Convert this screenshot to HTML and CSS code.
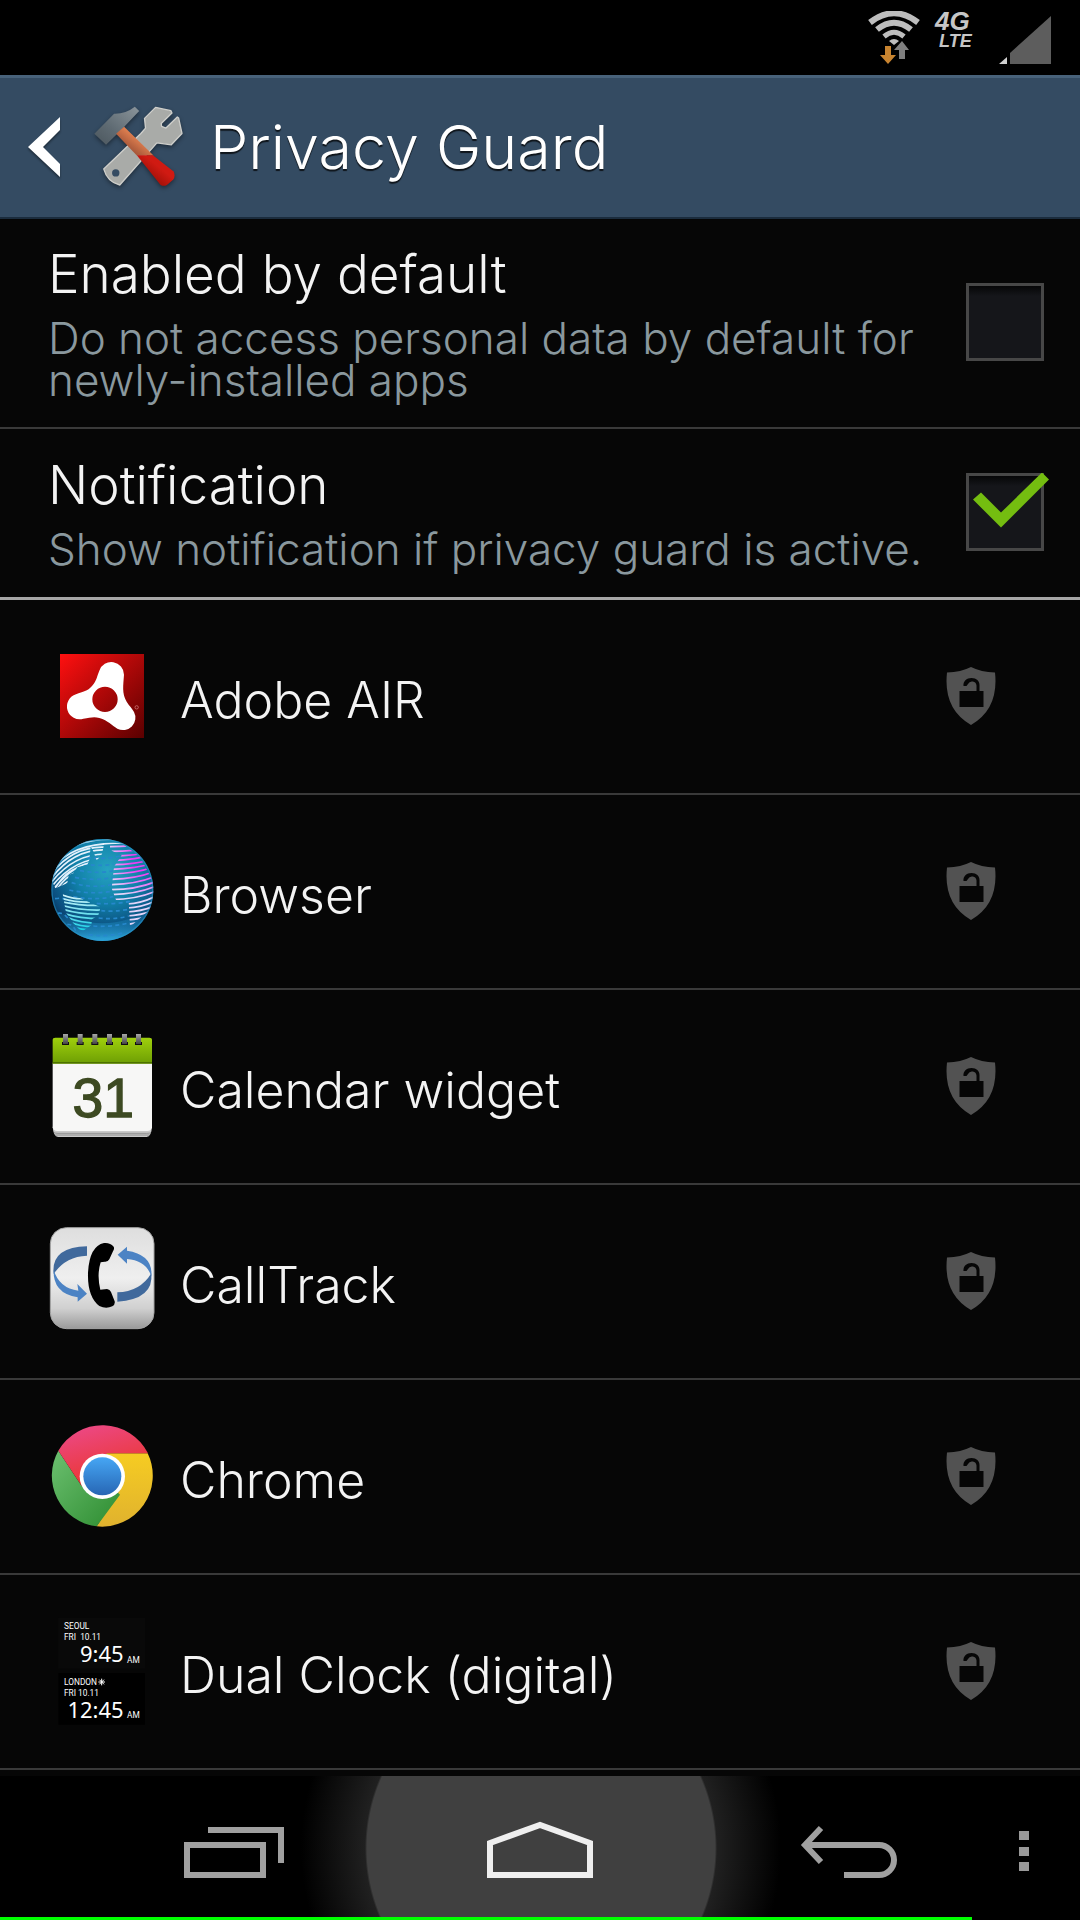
FILE: index.html
```
<!DOCTYPE html>
<html lang="en">
<head>
<meta charset="utf-8">
<meta name="viewport" content="width=device-width, initial-scale=1">
<title>Privacy Guard</title>
<link rel="stylesheet" href="styles.css">
</head>
<body>
<svg class="defs" aria-hidden="true">
  <symbol id="shield" viewBox="0 0 50 58">
    <path fill="#525252" d="M25 0Q35 5 49 5.500Q53 42 25 58Q-3 42 1 5.500Q15 5 25 0Z"/>
    <path fill="#060606" d="M13.500 24H30.500V18.500A4.500 4.500 0 0 0 22 17L20.500 19H17.500C17 14.500 20.500 11 25.500 11C30.500 11 33.500 14 33.500 18V24H37.500V40H13.500Z"/>
  </symbol>
</svg>

<div class="screen">
  <div class="status">
    <svg class="status-wifi" viewBox="0 0 52 53" role="img" aria-label="Wi-Fi">
      <g fill="none" stroke="#bdbdbd">
        <path stroke-width="6" d="M2 11.500Q26-7 50 11.500"/>
        <path stroke-width="6" d="M9 18.500Q26 5 43 18.500"/>
        <path stroke-width="5" d="M16 25.500Q26 17 36 25.500"/>
      </g>
      <path fill="#bdbdbd" d="M21 30Q26 26 31 30L26 34Z"/>
      <path fill="#7f7f7f" d="M34 30L41 39H37V48H31V39H26Z"/>
      <path fill="#c88430" d="M17 35H23V44H28L20 53L12 44H17Z"/>
    </svg>
    <div class="status-net"><span class="net-4g">4G</span><span class="net-lte">LTE</span></div>
    <svg class="status-signal" viewBox="0 0 52 48" role="img" aria-label="Signal">
      <path fill="#d0d0d0" d="M0 48L8 41V48Z"/>
      <path fill="#5d5d5d" d="M11 48V37L52 0V48Z"/>
    </svg>
  </div>

  <header class="bar">
    <button class="bar-back" type="button" aria-label="Back">
      <svg class="back-icon" viewBox="0 0 32 60"><path fill="#fff" d="M32 0V13L15 30L32 47V60L0 30Z"/></svg>
    </button>
    <svg class="bar-tools" viewBox="222 36 266 242" aria-hidden="true">
      <defs>
        <linearGradient id="head" x1="0" y1="1" x2="1" y2="0"><stop offset="0" stop-color="#4b565d"/><stop offset=".4" stop-color="#5e6a72"/><stop offset="1" stop-color="#8b959b"/></linearGradient>
        <linearGradient id="wood" x1="0" y1="1" x2="1" y2="0"><stop offset=".3" stop-color="#a8583a"/><stop offset=".6" stop-color="#e08050"/></linearGradient>
        <linearGradient id="grip" x1="0" y1="1" x2="1" y2="0"><stop offset=".3" stop-color="#a01008"/><stop offset=".6" stop-color="#d01a12"/></linearGradient>
      </defs>
      <path fill="#a9aba8" stroke="#cfcfcb" stroke-width="4" stroke-linejoin="round" d="M406 40L452 50L455 57L423 88L424 97L437 102L471 69L475 72L485 118L453 152L410 146L299 272Q262 264 251 224L362 118L376 102L373 73Z"/>
      <circle cx="287" cy="236" r="11" fill="#344b62"/>
      <path fill="url(#head)" d="M223 119L282 59Q316 60 344 38L357 51L304 107L258 152Z"/>
      <path fill="url(#wood)" d="M288 119L312 98L400 184L350 184Z"/>
      <path fill="url(#grip)" d="M350 183H398L460 232Q466 245 459 256L440 272Q430 277 421 272Z"/>
    </svg>
    <h1 class="bar-title">Privacy Guard</h1>
  </header>

  <main class="content">
    <section class="prefs">
      <label class="pref">
        <span class="pref-text"><span class="pref-title">Enabled by default</span><span class="pref-sub">Do not access personal data by default for newly-installed apps</span></span>
        <input class="check" type="checkbox">
      </label>
      <label class="pref">
        <span class="pref-text"><span class="pref-title">Notification</span><span class="pref-sub">Show notification if privacy guard is active.</span></span>
        <input class="check" type="checkbox" checked>
      </label>
    </section>

    <ul class="apps">
      <li class="app">
        <svg class="app-icon" viewBox="54 36 324 324" aria-hidden="true">
          <defs><linearGradient id="air" x1="0" y1="0" x2="1" y2="1"><stop offset="0" stop-color="#ff1010"/><stop offset="1" stop-color="#5a0000"/></linearGradient></defs>
          <rect x="90" y="72" width="252" height="252" fill="url(#air)"/>
          <path fill="#fff" fill-rule="evenodd" d="M208 122A38 38 0 0 1 282 134C280 165 275 190 290 215C298 228 306 234 312 246A37 37 0 0 1 262 296C245 286 235 272 208 264C190 259 180 264 160 266A37 37 0 0 1 138 193C160 184 172 184 186 168C201 150 201 138 208 122ZM225 170A38 38 0 1 0 225 246A38 38 0 1 0 225 170Z"/>
          <circle cx="320" cy="232" r="5" fill="none" stroke="#d88" stroke-width="2"/>
        </svg>
        <span class="app-name">Adobe AIR</span>
        <button class="app-guard" type="button" aria-label="Guard Adobe AIR"><svg class="shield"><use href="#shield"/></svg></button>
      </li>
      <li class="app">
        <svg class="app-icon" viewBox="54 621 324 324" aria-hidden="true">
          <defs>
            <radialGradient id="globe" cx=".55" cy=".3" r=".72"><stop offset="0" stop-color="#26a3c2"/><stop offset=".45" stop-color="#1180a8"/><stop offset=".8" stop-color="#0b4f80"/><stop offset="1" stop-color="#06294e"/></radialGradient>
            <linearGradient id="globe-base" x1="0" y1="0" x2="0" y2="1"><stop offset="0" stop-color="#0b6aa0" stop-opacity="0"/><stop offset="1" stop-color="#35b8ee"/></linearGradient>
            <radialGradient id="pink" gradientUnits="userSpaceOnUse" cx="345" cy="690" r="130"><stop offset=".3" stop-color="#f03cf4"/><stop offset=".9" stop-color="#e4d4fa"/></radialGradient>
            <linearGradient id="aqua" x1="0" y1="0" x2="0" y2="1"><stop offset="0" stop-color="#d5f4fa"/><stop offset="1" stop-color="#19d0e4"/></linearGradient>
            <clipPath id="disc"><circle cx="217" cy="780" r="153"/></clipPath>
            <clipPath id="land-east"><path d="M240 630L275 640L330 680L372 760L370 830L300 890L296 812L258 810L245 775L252 710L275 676L240 660Z"/></clipPath>
            <clipPath id="land-west"><path d="M150 635L290 624L290 640L222 644L216 672L200 692L190 664L182 650L178 690L172 705L142 712L130 730L116 735L112 760L76 775L60 740L90 670Z"/></clipPath>
            <clipPath id="land-south"><path d="M98 792L145 802L212 832L205 856L186 868L184 886L155 905L130 880L108 848Z"/></clipPath>
          </defs>
          <circle cx="217" cy="780" r="153" fill="url(#globe)"/>
          <g clip-path="url(#disc)">
            <path fill="url(#globe-base)" d="M60 830Q217 930 374 830V940H60Z"/>
            <g fill="none" stroke="#2688cc" stroke-width="5" stroke-dasharray="12 10">
              <path d="M170 682Q220 690 270 678M160 702Q220 710 250 702M150 722Q205 732 250 722M135 742Q195 754 250 742M125 758Q185 776 245 764M118 780Q180 794 245 784M130 800Q190 812 250 800M200 820Q250 824 300 814M214 842Q250 846 296 838M206 864Q250 870 296 858M190 888Q245 892 300 878M176 914Q230 922 280 908M75 806Q110 800 120 820M84 850Q100 846 118 870M112 884Q130 880 140 910"/>
            </g>
            <g fill="none" stroke="#e3f1fc" stroke-width="5" clip-path="url(#land-west)">
              <path d="M60 700Q140 610 300 632M60 720Q140 625 300 644M60 736Q130 645 230 652M60 750Q130 655 230 660M60 762Q130 670 230 672M60 776Q130 684 230 684M60 790Q130 700 190 698M60 802Q100 722 150 712M60 812Q95 744 140 726M70 814Q90 762 120 752M76 830Q95 782 120 766"/>
            </g>
            <g fill="none" stroke="url(#pink)" stroke-width="5" clip-path="url(#land-east)">
              <path d="M240 650Q300 650 372 640M245 664Q310 664 372 652M245 678Q320 678 374 662M245 692Q320 690 374 672M245 704Q320 704 374 686M245 718Q320 716 374 698M245 732Q320 730 374 710M245 748Q320 746 374 724M245 764Q320 762 374 740M245 779Q320 778 374 756M245 794Q320 792 374 770M245 809Q320 808 374 785M290 822Q335 820 374 800M290 834Q335 832 374 814M290 846Q335 844 374 828M290 858Q335 856 374 840M290 870Q335 868 374 852M290 884Q320 880 374 864"/>
            </g>
            <g fill="none" stroke="url(#aqua)" stroke-width="5" clip-path="url(#land-south)">
              <path d="M90 792Q130 808 160 806M90 804Q140 818 180 816M90 814Q150 828 215 826M95 826Q150 842 215 840M100 838Q150 854 215 852M100 850Q150 866 215 866M110 862Q150 880 215 880M120 876Q150 890 190 890M130 890Q155 900 180 900"/>
            </g>
          </g>
          <circle cx="217" cy="780" r="151" fill="none" stroke="#2a9cd0" stroke-opacity=".5" stroke-width="4"/>
        </svg>
        <span class="app-name">Browser</span>
        <button class="app-guard" type="button" aria-label="Guard Browser"><svg class="shield"><use href="#shield"/></svg></button>
      </li>
      <li class="app">
        <svg class="app-icon" viewBox="54 66 324 324" aria-hidden="true">
          <defs>
            <linearGradient id="cal" x1="0" y1="0" x2="0" y2="1"><stop offset="0" stop-color="#9fd00c"/><stop offset="1" stop-color="#6d9e04"/></linearGradient>
            <linearGradient id="ring" x1="0" y1="0" x2="0" y2="1"><stop offset="0" stop-color="#a8a8a8"/><stop offset="1" stop-color="#444"/></linearGradient>
          </defs>
          <path fill="#c9c9c9" d="M68 350H366Q364 380 350 381H84Q70 380 68 350Z"/>
          <path fill="none" stroke="#777" stroke-width="2" d="M72 368Q76 370 84 370H350Q360 370 362 368M76 375H358"/>
          <path fill="#f7f7f6" d="M68 160H366V352Q364 363 352 363H82Q70 363 68 352Z"/>
          <path fill="url(#cal)" d="M68 161V90Q68 83 76 83H358Q366 83 366 90V161Z"/>
          <path fill="#4d7200" d="M68 156H366V160H68Z"/>
          <path fill="#111" d="M96 96H117V105H96ZM140 96H161V105H140ZM184 96H205V105H184ZM228 96H249V105H228ZM273 96H294V105H273ZM315 96H336V105H315Z"/>
          <path fill="url(#ring)" d="M99 72H114V102H99ZM143 72H158V102H143ZM187 72H202V102H187ZM231 72H246V102H231ZM276 72H291V102H276ZM318 72H333V102H318Z"/>
          <text class="cal-day" x="220" y="320">31</text>
        </svg>
        <span class="app-name">Calendar widget</span>
        <button class="app-guard" type="button" aria-label="Guard Calendar widget"><svg class="shield"><use href="#shield"/></svg></button>
      </li>
      <li class="app">
        <svg class="app-icon" viewBox="54 651 324 324" aria-hidden="true">
          <defs><linearGradient id="tile" x1="0" y1="0" x2="0" y2="1"><stop offset="0" stop-color="#dedede"/><stop offset=".5" stop-color="#efefef"/><stop offset=".8" stop-color="#d0d0d0"/><stop offset="1" stop-color="#9a9a9a"/></linearGradient></defs>
          <rect x="61" y="653" width="311" height="303" rx="48" fill="url(#tile)" stroke="#a5a5a5" stroke-width="3"/>
          <path fill="#40699c" d="M171 709V737Q105 740 71 792Q62 712 171 709Z"/>
          <path fill="#4c83c4" d="M71 780Q88 835 145 842L142 822L171 851L143 875V862Q68 850 71 780Z"/>
          <path fill="#40699c" d="M262 875V847Q330 846 364 790Q372 868 262 875Z"/>
          <path fill="#4c83c4" d="M364 800Q350 752 291 747V761L263 734L291 710V722Q370 734 364 800Z"/>
          <path fill="#000" d="M222 699Q240 697 251 710Q254 716 249 724L238 748Q234 756 224 755L212 757Q200 795 211 839L231 837Q240 838 243 846L254 874Q256 884 247 889Q228 898 208 888Q172 860 174 789Q178 708 222 699Z"/>
        </svg>
        <span class="app-name">CallTrack</span>
        <button class="app-guard" type="button" aria-label="Guard CallTrack"><svg class="shield"><use href="#shield"/></svg></button>
      </li>
      <li class="app">
        <svg class="app-icon" viewBox="54 66 324 324" aria-hidden="true">
          <defs>
            <linearGradient id="red" x1=".3" y1="0" x2=".7" y2="1"><stop offset="0" stop-color="#ec4884"/><stop offset="1" stop-color="#ea3424"/></linearGradient>
            <linearGradient id="green" x1="0" y1="0" x2="1" y2="1"><stop offset="0" stop-color="#6cc070"/><stop offset="1" stop-color="#2d8c30"/></linearGradient>
            <linearGradient id="yellow" x1="0" y1="0" x2="0" y2="1"><stop offset="0" stop-color="#f6cc22"/><stop offset="1" stop-color="#e0b22e"/></linearGradient>
            <linearGradient id="blue" x1="0" y1="0" x2="0" y2="1"><stop offset="0" stop-color="#46a6f4"/><stop offset="1" stop-color="#2766b4"/></linearGradient>
          </defs>
          <path fill="url(#yellow)" d="M217 160H353A152 153 0 0 1 200 379L275 260Z"/>
          <path fill="url(#green)" d="M85 152A152 153 0 0 0 200 379L270 284L217 230L155 258Z"/>
          <path fill="url(#red)" d="M85 152A153 153 0 0 1 354 160H230L217 230L155 258Z"/>
          <circle cx="217" cy="229" r="68" fill="#fff"/>
          <circle cx="217" cy="229" r="57" fill="url(#blue)"/>
        </svg>
        <span class="app-name">Chrome</span>
        <button class="app-guard" type="button" aria-label="Guard Chrome"><svg class="shield"><use href="#shield"/></svg></button>
      </li>
      <li class="app">
        <svg class="app-icon" viewBox="54 651 324 324" aria-hidden="true">
          <path fill="#090909" d="M85 653H345V806H85Z"/>
          <path fill="#000" d="M85 819H345V974H85Z"/>
          <text class="clock-small" x="102" y="688">SEOUL</text>
          <text class="clock-small" x="102" y="720">FRI  10.11</text>
          <text class="clock-time" x="281" y="787">9:45</text>
          <text class="clock-small" x="291" y="788">AM</text>
          <text class="clock-small" x="102" y="855">LONDON</text>
          <path stroke="#fff" stroke-width="3" d="M215 836V856M205 846H225M208 839L222 853M222 839L208 853"/>
          <text class="clock-small" x="102" y="888">FRI 10.11</text>
          <text class="clock-time" x="281" y="954">12:45</text>
          <text class="clock-small" x="291" y="955">AM</text>
        </svg>
        <span class="app-name">Dual Clock (digital)</span>
        <button class="app-guard" type="button" aria-label="Guard Dual Clock"><svg class="shield"><use href="#shield"/></svg></button>
      </li>
    </ul>
  </main>

  <nav class="nav">
    <button class="nav-button nav-recents" type="button" aria-label="Recent apps">
      <svg class="nav-icon" viewBox="0 0 108 60"><path fill="none" stroke="#a0a0a0" stroke-width="6" d="M7 27H83V57H7ZM28 12H101V45"/></svg>
    </button>
    <button class="nav-button nav-home" type="button" aria-label="Home">
      <svg class="nav-icon" viewBox="0 0 108 60"><path fill="none" stroke="#efefef" stroke-width="6" d="M4 57V25L54 7L104 25V57Z"/></svg>
    </button>
    <button class="nav-button nav-return" type="button" aria-label="Back">
      <svg class="nav-icon" viewBox="0 0 108 60"><path fill="none" stroke="#a0a0a0" stroke-width="6" d="M13 27H87A15 15 0 0 1 87 57H52M29 10L13 27L29 44"/></svg>
    </button>
    <button class="nav-button nav-menu" type="button" aria-label="Menu">
      <svg class="menu-icon" viewBox="0 0 10 60"><path fill="#999" d="M0 13H10V22H0ZM0 29H10V38H0ZM0 44H10V53H0Z"/></svg>
    </button>
    <div class="battery"></div>
  </nav>
</div>
</body>
</html>
```
FILE: styles.css
```
* {
  box-sizing: border-box;
}

body {
  margin: 0;
  background: #000;
  color: #f3f3f3;
  font-family: Inter, "Liberation Sans", sans-serif;
  font-weight: 300;
}

button {
  padding: 0;
  border: 0;
  background: none;
  color: inherit;
  font: inherit;
  cursor: pointer;
}

svg {
  display: block;
}

.defs {
  position: absolute;
  width: 0;
  height: 0;
}

.screen {
  display: flex;
  flex-direction: column;
  min-height: 100vh;
}

/* Status bar */
.status {
  display: flex;
  justify-content: flex-end;
  height: 75px;
  padding: 11px 29px 0 0;
}

.status-wifi {
  width: 52px;
  height: 53px;
}

.status-net {
  display: flex;
  flex-direction: column;
  gap: 1px;
  width: 40px;
  margin: 0 24px 0 15px;
  color: #c6c6c6;
  font-family: "Liberation Sans", sans-serif;
  font-style: italic;
  font-weight: 700;
}

.net-4g {
  font-size: 26px;
  line-height: 20px;
}

.net-lte {
  padding-left: 4px;
  font-size: 18px;
  line-height: 18px;
}

.status-signal {
  width: 52px;
  height: 48px;
  margin-top: 5px;
}

/* Action bar */
.bar {
  display: flex;
  align-items: center;
  height: 144px;
  padding: 0 0 2px 28px;
  border-top: 3px solid #48627a;
  border-bottom: 2px solid #1b2c3d;
  background: #344b62;
}

.back-icon {
  width: 32px;
  height: 60px;
  filter: drop-shadow(0 2px 1px #0006);
}

.bar-tools {
  width: 89px;
  height: 81px;
  margin: 0 27px 0 34px;
  filter: drop-shadow(0 2px 2px #0006);
}

.bar-title {
  margin: 0;
  color: #fff;
  font-size: 61px;
  font-weight: 300;
  line-height: 72px;
  text-shadow: 0 2px 1px #000b;
}

.content {
  flex: 1;
  background: #060606;
}

/* Preferences */
.pref {
  display: flex;
  align-items: center;
  justify-content: space-between;
  min-height: 171px;
  padding: 23px 36px 26px 48px;
  border-bottom: 2px solid #393939;
}

.pref:last-child {
  border-bottom: 3px solid #a6a6a6;
}

.pref-text {
  display: flex;
  flex-direction: column;
  gap: 11px;
}

.pref-title {
  font-size: 53px;
  line-height: 64px;
}

.pref-sub {
  color: #8a989e;
  font-size: 44px;
  line-height: 42px;
}

.check {
  position: relative;
  flex: none;
  width: 78px;
  height: 78px;
  margin: 0;
  border: 3px solid #474747;
  background: linear-gradient(#060607, #15161a 10px);
  appearance: none;
}

.check:checked::before {
  content: "";
  position: absolute;
  top: -3px;
  left: 4px;
  width: 76px;
  height: 55px;
  background: #74bd10;
  clip-path: polygon(0 27px, 8px 20px, 28px 40px, 69px 0, 76px 7px, 28px 55px);
}

/* App list */
.apps {
  margin: 0;
  padding: 0 0 6px;
  list-style: none;
}

.app {
  display: flex;
  align-items: center;
  gap: 24px;
  height: 195px;
  padding: 0 84px 2px 48px;
  border-bottom: 2px solid #393939;
}

.app-icon {
  flex: none;
  width: 108px;
  height: 108px;
}

.app-name {
  flex: 1;
  padding-top: 8px;
  font-size: 50px;
  line-height: 60px;
}

.shield {
  width: 50px;
  height: 58px;
}

.cal-day {
  fill: #3d4a22;
  font-family: "Liberation Sans", sans-serif;
  font-size: 166px;
  font-weight: 400;
  stroke: #3d4a22;
  stroke-width: 4px;
  text-anchor: middle;
}

.clock-small {
  fill: #fff;
  font-family: Roboto, sans-serif;
  font-size: 25px;
  font-weight: 400;
  white-space: pre;
}

.clock-time {
  fill: #fff;
  font-family: "Noto Sans", sans-serif;
  font-size: 66px;
  font-weight: 400;
  text-anchor: end;
}

/* Navigation bar */
.nav {
  position: relative;
  display: grid;
  grid-template-columns: 81fr 306fr 306fr 306fr 81fr;
  height: 144px;
  overflow: hidden;
  background: radial-gradient(circle at calc(50% + 1px) 72px, #404040 174px, #202020 176px, #000 240px);
}

.nav-button {
  display: flex;
  align-items: center;
  justify-content: center;
}

.nav-recents {
  grid-column: 2;
}

.nav-menu {
  justify-content: flex-start;
  padding-left: 20px;
}

.nav-icon {
  width: 108px;
  height: 60px;
}

.menu-icon {
  width: 10px;
  height: 60px;
}

.battery {
  position: absolute;
  bottom: 0;
  left: 0;
  width: 90%;
  height: 3px;
  background: #0f0;
}
```
